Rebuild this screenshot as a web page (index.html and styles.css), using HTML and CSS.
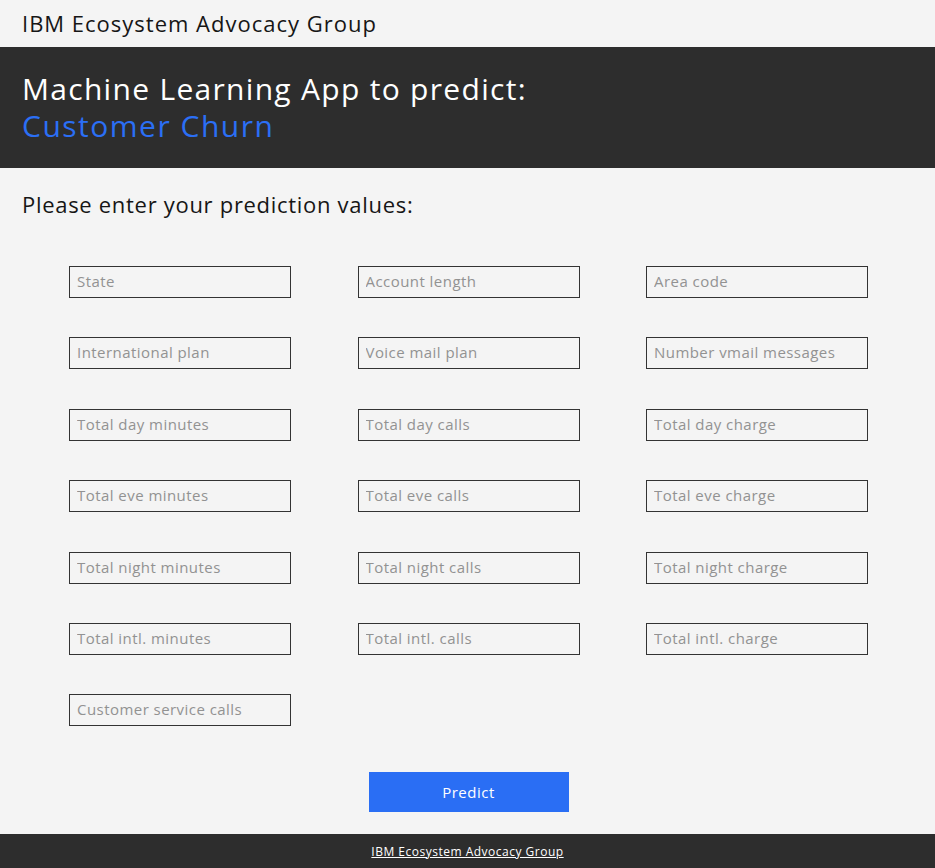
FILE: index.html
```html
<!DOCTYPE html>
<html lang="en">
<head>
<meta charset="utf-8">
<title>Customer Churn</title>
<link rel="stylesheet" href="styles.css">
</head>
<body>
<header class="topbar">IBM Ecosystem Advocacy Group</header>
<section class="hero">
  <h1 class="hero-title">Machine Learning App to predict:<br><span class="accent">Customer Churn</span></h1>
</section>
<main class="content">
  <h2 class="subtitle">Please enter your prediction values:</h2>
  <form class="form">
    <div class="grid">
      <input class="field" placeholder="State">
      <input class="field" placeholder="Account length">
      <input class="field" placeholder="Area code">
      <input class="field" placeholder="International plan">
      <input class="field" placeholder="Voice mail plan">
      <input class="field" placeholder="Number vmail messages">
      <input class="field" placeholder="Total day minutes">
      <input class="field" placeholder="Total day calls">
      <input class="field" placeholder="Total day charge">
      <input class="field" placeholder="Total eve minutes">
      <input class="field" placeholder="Total eve calls">
      <input class="field" placeholder="Total eve charge">
      <input class="field" placeholder="Total night minutes">
      <input class="field" placeholder="Total night calls">
      <input class="field" placeholder="Total night charge">
      <input class="field" placeholder="Total intl. minutes">
      <input class="field" placeholder="Total intl. calls">
      <input class="field" placeholder="Total intl. charge">
      <input class="field" placeholder="Customer service calls">
    </div>
    <div class="actions"><button type="button" class="predict">Predict</button></div>
  </form>
</main>
<footer class="footer"><a href="#" class="footer-link">IBM Ecosystem Advocacy Group</a></footer>
</body>
</html>
```
FILE: styles.css
```css
* { box-sizing: border-box; }
html, body { margin: 0; padding: 0; }
body {
  background: #f4f4f4;
  font-family: "Open Sans", "DejaVu Sans", sans-serif;
  color: #161616;
  width: 935px;
  height: 868px;
  display: flex;
  flex-direction: column;
}
.topbar {
  height: 47px;
  padding: 8px 22px 0;
  font-size: 22px;
  line-height: 30px;
  letter-spacing: 1px;
  color: #161616;
}
.hero {
  height: 121px;
  background: #2d2d2d;
  padding: 23px 22px 0;
}
.hero-title {
  margin: 0;
  font-weight: 400;
  font-size: 30px;
  line-height: 37px;
  letter-spacing: 1.3px;
  color: #ffffff;
}
.accent { color: #2b6ff5; letter-spacing: 1.5px; }
.content {
  flex: 1;
  padding: 20px 22px 0;
}
.subtitle {
  margin: 0;
  font-weight: 400;
  font-size: 22px;
  line-height: 32px;
  letter-spacing: 0.7px;
}
.form { margin-top: 46px; }
.grid {
  display: grid;
  grid-template-columns: repeat(3, 222px);
  column-gap: 66.5px;
  row-gap: 39.4px;
  justify-content: center;
  margin-left: -20px;
  margin-right: -22px;
}
.field {
  width: 222px;
  height: 32px;
  border: 1px solid #333333;
  background: #f4f4f4;
  padding: 0 7px 2px;
  font-family: inherit;
  font-size: 15px;
  letter-spacing: 0.45px;
  color: #161616;
  outline: none;
}
.field::placeholder { color: #929292; }
.actions {
  display: flex;
  justify-content: center;
  margin-top: 46px;
  margin-left: -20px;
  margin-right: -22px;
}
.predict {
  width: 200px;
  height: 40px;
  border: none;
  background: #2a6ef4;
  color: #ffffff;
  font-family: inherit;
  font-size: 15px;
  letter-spacing: 0.5px;
}
.footer {
  height: 34px;
  background: #2d2d2d;
  display: flex;
  align-items: center;
  justify-content: center;
}
.footer-link {
  color: #ffffff;
  font-size: 12px;
  letter-spacing: 0.5px;
  text-decoration: underline;
}
```
